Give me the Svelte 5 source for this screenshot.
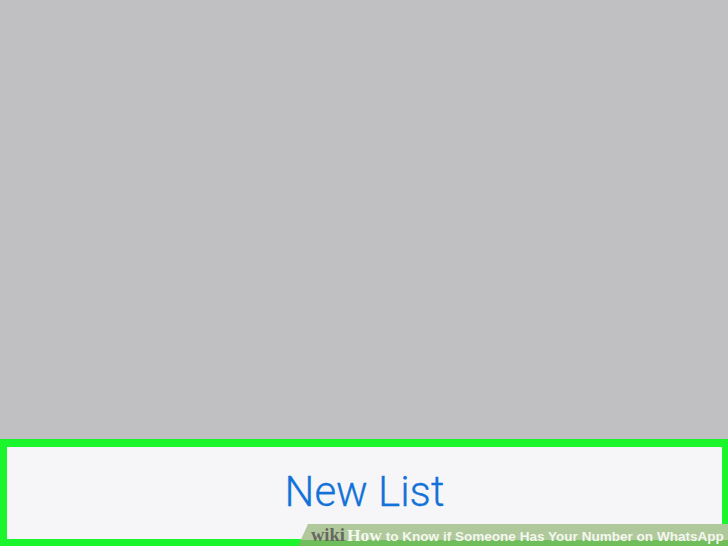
<script>
	const title = 'New List';
	const caption = 'to Know if Someone Has Your Number on WhatsApp';
</script>

<div class="page">
	<div class="backdrop"></div>
	<div class="highlight">
		<div class="sheet">
			<span class="action">{title}</span>
		</div>
	</div>
	<div class="banner">
		<span class="wiki">wiki</span><span class="how">How</span>
		<span class="caption">{caption}</span>
	</div>
</div>

<style>
	:global(body) {
		margin: 0;
		background: #c0bfc2;
	}
	.page {
		position: relative;
		width: 728px;
		height: 546px;
		display: flex;
		flex-direction: column;
		overflow: hidden;
		font-family: 'Liberation Sans', Arial, sans-serif;
	}
	.backdrop {
		flex: 1;
		background: #c0bfc2;
	}
	.highlight {
		height: 107px;
		padding: 8px 6px 7px 7px;
		box-sizing: border-box;
		background: #1bf52b;
		display: flex;
	}
	.sheet {
		flex: 1;
		background: #f6f6f9;
		display: flex;
		justify-content: center;
		padding-top: 20px;
		box-sizing: border-box;
	}
	.action {
		font-family: Roboto, 'Liberation Sans', sans-serif;
		font-size: 42px;
		font-weight: 300;
		-webkit-text-stroke: 0.3px #1272d8;
		line-height: 50px;
		color: #1272d8;
		height: 50px;
	}
	.banner {
		position: absolute;
		right: 0;
		bottom: 0;
		width: 430px;
		height: 22px;
		box-sizing: border-box;
		padding: 2px 0 0 13px;
		background: linear-gradient(#b0c99c 0 16px, #70bd5b 16px);
		clip-path: polygon(10px 0, 100% 0, 100% 100%, 0 100%);
		white-space: nowrap;
		font-size: 13.55px;
		font-weight: 700;
		line-height: 18px;
		color: #f4f8ee;
	}
	.wiki {
		font-family: 'Liberation Serif', serif;
		font-size: 18.5px;
		color: #66675f;
	}
	.how {
		font-family: 'Liberation Serif', serif;
		font-size: 17.5px;
		margin-left: 2px;
	}
</style>
